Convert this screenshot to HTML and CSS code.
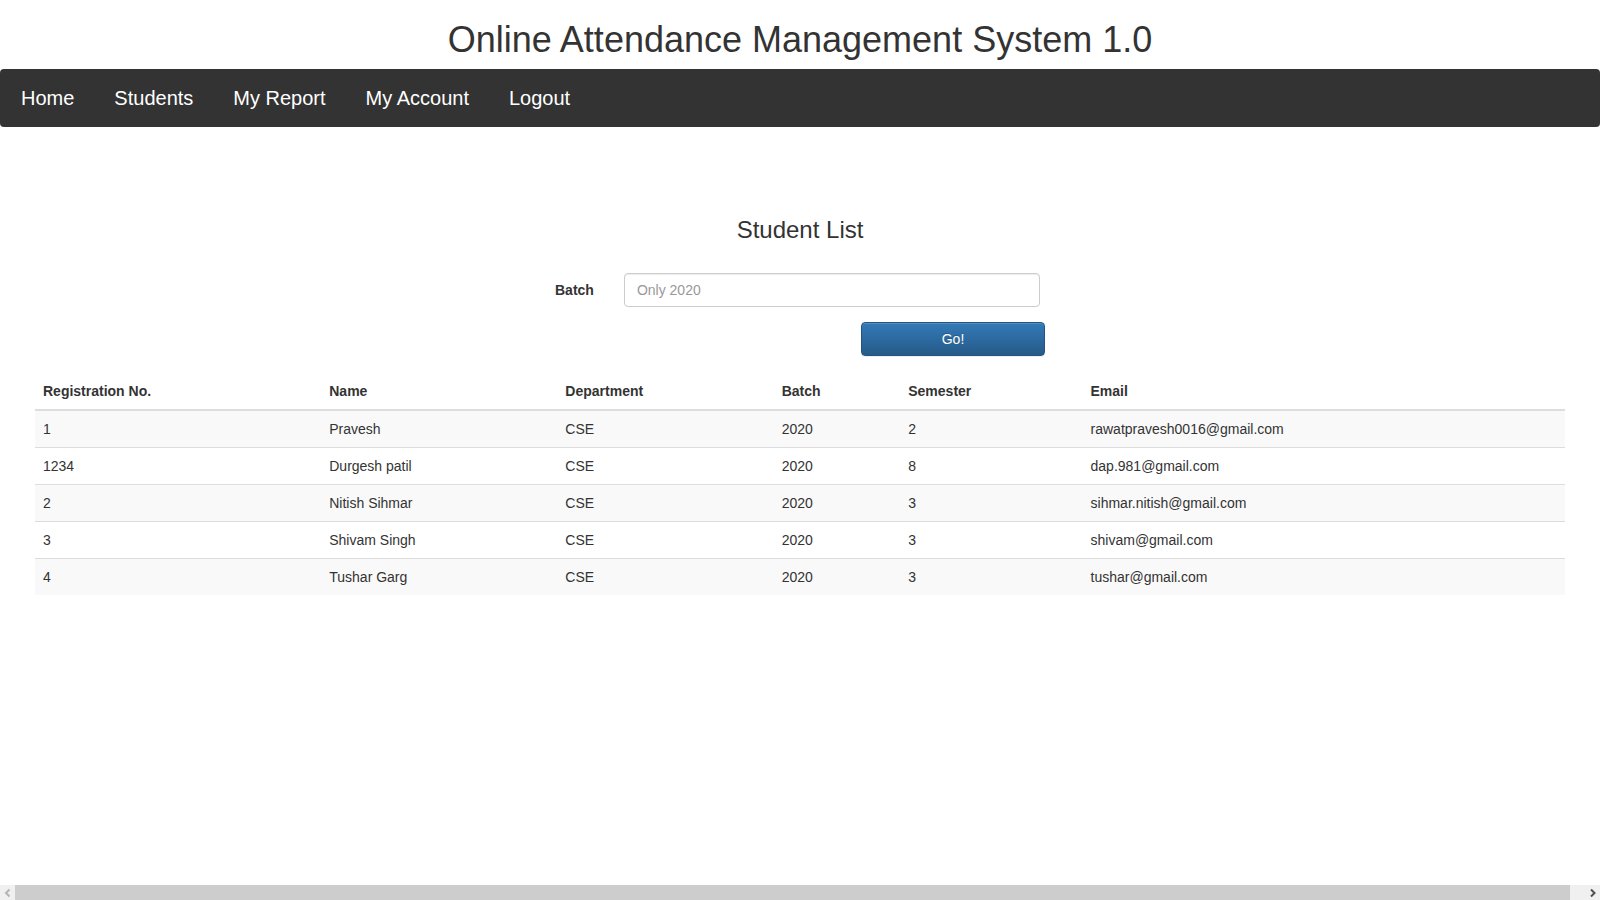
FILE: index.html
```html
<!DOCTYPE html>
<html lang="en">
<head>
<meta charset="utf-8">
<meta name="viewport" content="width=device-width, initial-scale=1">
<title>Online Attendance Management System 1.0</title>
<link rel="stylesheet" href="styles.css">
</head>
<body>
<header>
  <h1 class="site-title">Online Attendance Management System 1.0</h1>
  <nav class="navbar">
    <a href="#home">Home</a>
    <a href="#students">Students</a>
    <a href="#report">My Report</a>
    <a href="#account">My Account</a>
    <a href="#logout">Logout</a>
  </nav>
</header>
<main class="content">
  <h3 class="list-title">Student List</h3>
  <form class="batch-form">
    <div class="field">
      <label for="batch">Batch</label>
      <input id="batch" type="text" placeholder="Only 2020">
    </div>
    <button class="go" type="button">Go!</button>
  </form>
  <table class="students">
    <thead>
      <tr><th>Registration No.</th><th>Name</th><th>Department</th><th>Batch</th><th>Semester</th><th>Email</th></tr>
    </thead>
    <tbody>
      <tr><td>1</td><td>Pravesh</td><td>CSE</td><td>2020</td><td>2</td><td>rawatpravesh0016@gmail.com</td></tr>
      <tr><td>1234</td><td>Durgesh patil</td><td>CSE</td><td>2020</td><td>8</td><td>dap.981@gmail.com</td></tr>
      <tr><td>2</td><td>Nitish Sihmar</td><td>CSE</td><td>2020</td><td>3</td><td>sihmar.nitish@gmail.com</td></tr>
      <tr><td>3</td><td>Shivam Singh</td><td>CSE</td><td>2020</td><td>3</td><td>shivam@gmail.com</td></tr>
      <tr><td>4</td><td>Tushar Garg</td><td>CSE</td><td>2020</td><td>3</td><td>tushar@gmail.com</td></tr>
    </tbody>
  </table>
</main>
<div class="scrollbar">
  <button class="arrow arrow-left" type="button" aria-label="Scroll left"><svg viewBox="0 0 15 15" width="15" height="15"><path d="M9.5 4.5 6 8l3.5 3.5"/></svg></button>
  <div class="track"><div class="thumb"></div></div>
  <button class="arrow" type="button" aria-label="Scroll right"><svg viewBox="0 0 15 15" width="15" height="15"><path d="M6 4.5 9.5 8 6 11.5"/></svg></button>
</div>
</body>
</html>
```
FILE: styles.css
```css
* {
  box-sizing: border-box;
}

body {
  display: flex;
  flex-direction: column;
  min-height: 100vh;
  margin: 0;
  background: #fff;
  color: #333;
  font: 14px/20px "Liberation Sans", Arial, sans-serif;
}

.site-title {
  margin: 20px 0 9px;
  font-size: 36px;
  font-weight: 400;
  line-height: 40px;
  text-align: center;
}

.navbar {
  display: flex;
  padding: 1px;
  border-radius: 4px;
  background: #333;
}

.navbar a {
  padding: 14px 20px;
  color: #fff;
  font-size: 20px;
  line-height: 28px;
  text-decoration: none;
}

.content {
  flex: 1;
  padding: 90px 35px 20px;
}

.list-title {
  margin: 0 0 30px;
  font-size: 24px;
  font-weight: 400;
  line-height: 26px;
  text-align: center;
}

.batch-form {
  display: flex;
  flex-direction: column;
  gap: 15px;
  max-width: 490px;
  margin: 0 auto 17px;
}

.field {
  display: flex;
  align-items: center;
  gap: 30px;
  padding-right: 5px;
}

.field label {
  font-weight: 700;
}

.field input {
  flex: 1;
  min-width: 0;
  height: 34px;
  padding: 6px 12px;
  border: 1px solid #ccc;
  border-radius: 4px;
  background: #fff;
  box-shadow: inset 0 1px 1px rgba(0, 0, 0, .075);
  color: #555;
  font: inherit;
}

.field input::placeholder {
  color: #999;
  opacity: 1;
}

.go {
  align-self: flex-end;
  width: 184px;
  height: 34px;
  padding: 6px 12px;
  border: 1px solid #245580;
  border-radius: 4px;
  background: linear-gradient(#337ab7, #265a88);
  box-shadow: inset 0 1px 0 rgba(255, 255, 255, .15), 0 1px 1px rgba(0, 0, 0, .075);
  color: #fff;
  font: inherit;
  text-shadow: 0 -1px 0 rgba(0, 0, 0, .2);
}

.students {
  width: 100%;
  border-collapse: collapse;
}

.students th,
.students td {
  padding: 8px;
  text-align: left;
}

.students th {
  border-bottom: 2px solid #ddd;
}

.students td {
  border-top: 1px solid #ddd;
}

.students tbody tr:nth-child(odd) {
  background: #f9f9f9;
}

.scrollbar {
  position: sticky;
  bottom: 0;
  display: flex;
  height: 15px;
  background: #f0f0f0;
}

.track {
  flex: 1;
  padding-right: 15px;
}

.thumb {
  height: 100%;
  background: #cdcdcd;
}

.arrow {
  width: 15px;
  height: 15px;
  padding: 0;
  border: 0;
  background: #f0f0f0;
  color: #505050;
}

.arrow-left {
  color: #b5b5b5;
}

.arrow svg {
  display: block;
  fill: none;
  stroke: currentColor;
  stroke-width: 2;
}
```
